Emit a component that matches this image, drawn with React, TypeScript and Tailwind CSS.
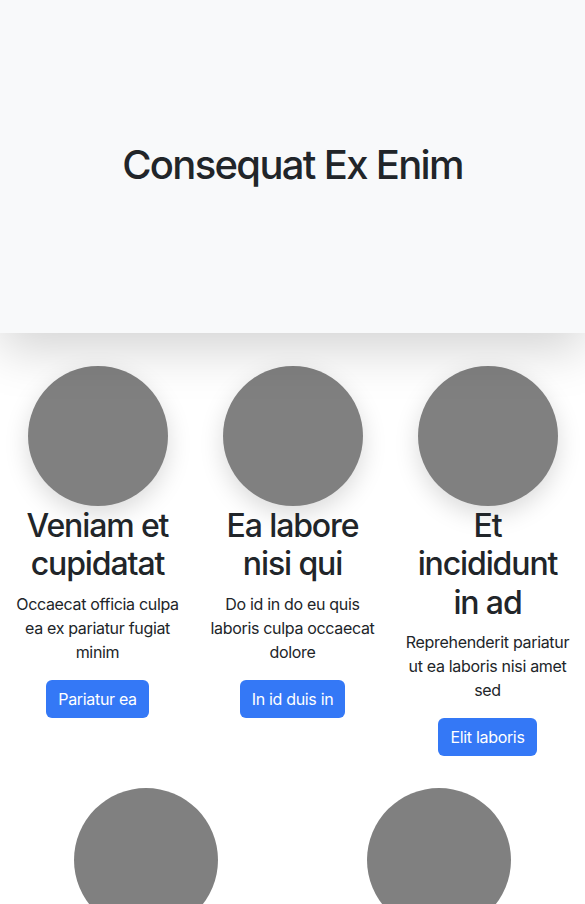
const features = [
  {
    title: "Veniam et cupidatat",
    text: "Occaecat officia culpa ea ex pariatur fugiat minim",
    button: "Pariatur ea",
  },
  {
    title: "Ea labore nisi qui",
    text: "Do id in do eu quis laboris culpa occaecat dolore",
    button: "In id duis in",
  },
  {
    title: "Et incididunt in ad",
    text: "Reprehenderit pariatur ut ea laboris nisi amet sed",
    button: "Elit laboris",
  },
];

const App = () => {
  return (
    <div
      className="w-full min-h-screen bg-white text-[#212529] tracking-[-0.02em]"
      style={{ fontFamily: "Inter, 'Noto Sans', sans-serif" }}
    >
      <div className="relative z-10 flex items-center justify-center w-full h-[333px] bg-[#f8f9fa] shadow-[0_16px_48px_rgba(0,0,0,0.175)]">
        <h1 className="-mt-1 text-[40px] leading-[1.2] font-medium tracking-[-0.042em]">
          Consequat Ex Enim
        </h1>
      </div>

      <div className="grid grid-cols-3 pt-[33px]">
        {features.map((item) => (
          <div key={item.title} className="flex flex-col items-center px-3 text-center">
            <div className="w-[140px] h-[140px] rounded-full bg-[#808080] shadow-[0_8px_24px_rgba(0,0,0,0.15)]" />
            <h2 className="mt-[1px] mb-2 text-[32px] leading-[1.2] font-medium tracking-[-0.035em]">
              {item.title}
            </h2>
            <p className="mb-4 text-base leading-6">{item.text}</p>
            <button className="px-3 h-[38px] rounded-md bg-[#3478f6] text-white text-base">
              {item.button}
            </button>
          </div>
        ))}
      </div>

      <div className="grid grid-cols-2 pt-8">
        <div className="flex justify-center">
          <div className="w-[144px] h-[144px] rounded-full bg-[#808080]" />
        </div>
        <div className="flex justify-center">
          <div className="w-[144px] h-[144px] rounded-full bg-[#808080]" />
        </div>
      </div>
    </div>
  );
};

export default App;
